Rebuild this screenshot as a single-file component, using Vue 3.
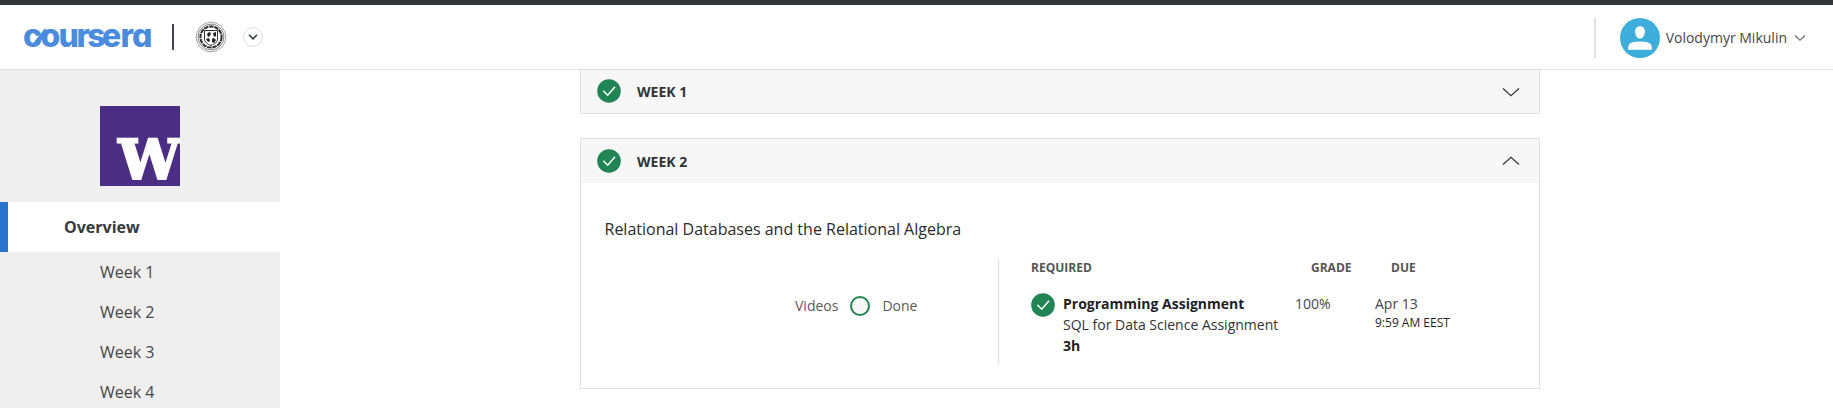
<script setup>
const weeks = ['Week 1', 'Week 2', 'Week 3', 'Week 4']
const cards = [
  { title: 'WEEK 1', open: false },
  { title: 'WEEK 2', open: true },
]
</script>

<template>
  <div class="page">
    <header class="header">
      <svg class="brand" width="130" height="26" viewBox="0 0 130 26" aria-label="coursera">
        <text y="22.500" :x="'-1 16.500 34.500 52.500 63.200 78 96.500 108'" class="brand-text">coursera</text>
        <path d="M11.500 20 L22.500 6" class="brand-link" />
      </svg>
      <span class="brand-divider"></span>
      <svg class="seal" width="32" height="32" viewBox="0 0 32 32" fill="none">
        <circle cx="16" cy="16" r="14.800" stroke="#888" stroke-width=".8" />
        <circle cx="16" cy="16" r="12.900" stroke="#666" stroke-width=".8" />
        <circle cx="16" cy="16" r="10.600" stroke="#292929" stroke-width="2" stroke-dasharray="4.500 .8" />
        <path d="M9.500 9.500H22.500V18C22.500 21 20 23 16 24.500C12 23 9.500 21 9.500 18Z" fill="#fff" stroke="#333" stroke-width="1" />
        <path d="M12 13l2-2 2 1-1 3-2 1zM18 12l3-1v4l-2 1zM11 18l3-1 1 3-2 1zM17 18l2-1 2 2-2 3-2-1z" fill="#222" />
      </svg>
      <span class="switcher">
        <svg width="10" height="6" viewBox="0 0 10 6" fill="none">
          <path d="M1 .8L5 4.800L9 .8" stroke="#373a3c" stroke-width="1.600" />
        </svg>
      </span>
      <div class="account">
        <svg width="40" height="40" viewBox="0 0 40 40">
          <circle cx="20" cy="20" r="20" fill="#3daedb" />
          <path d="M20 8.200c3 0 4.900 2.100 4.900 5.200 0 3.800-2.100 7.200-4.900 7.200s-4.900-3.400-4.900-7.200c0-3.100 1.900-5.200 4.900-5.200z" fill="#fff" />
          <path d="M8 31.700c0-5.500 1.200-8.200 12-8.200s12 2.700 12 8.200z" fill="#fff" />
        </svg>
        <span class="name">Volodymyr Mikulin</span>
        <svg width="12" height="8" viewBox="0 0 12 8" fill="none">
          <path d="M1 1.500L6 6.300L11 1.500" stroke="#666" stroke-width="1.100" />
        </svg>
      </div>
    </header>

    <div class="content">
      <aside class="sidebar">
        <svg class="school" width="80" height="80" viewBox="0 0 80 80">
          <rect width="80" height="80" fill="#4b2e83" />
          <text x="18.500" y="73" class="school-mark">W</text>
        </svg>
        <div class="overview">Overview</div>
        <div v-for="w in weeks" :key="w" class="week">{{ w }}</div>
      </aside>

      <main class="main">
        <section v-for="c in cards" :key="c.title" class="card" :class="{ open: c.open }">
          <div class="card-head">
            <svg class="check" width="24" height="24" viewBox="0 0 24 24" fill="none">
              <circle cx="12" cy="12" r="11.800" fill="#208455" />
              <path d="M6.300 11.700L10.700 16.200L18 7.800" stroke="#fff" stroke-width="1.500" />
            </svg>
            <h2>{{ c.title }}</h2>
            <svg class="toggle" width="18" height="10" viewBox="0 0 18 10" fill="none">
              <path :d="c.open ? 'M1 8.500L9 1.300L17 8.500' : 'M1 1.500L9 8.700L17 1.500'" stroke="#333" stroke-width="1.200" />
            </svg>
          </div>
          <div v-if="c.open" class="card-body">
            <h3>Relational Databases and the Relational Algebra</h3>
            <div class="columns">
              <div class="videos">
                <span>Videos</span>
                <i class="ring"></i>
                <span>Done</span>
              </div>
              <div class="required">
                <div class="row labels">
                  <span>REQUIRED</span><span>GRADE</span><span>DUE</span>
                </div>
                <div class="row item">
                  <svg width="24" height="24" viewBox="0 0 24 24" fill="none">
                    <circle cx="12" cy="12" r="11.800" fill="#208455" />
                    <path d="M6.300 11.700L10.700 16.200L18 7.800" stroke="#fff" stroke-width="1.500" />
                  </svg>
                  <div class="task">
                    <b>Programming Assignment</b>
                    <span>SQL for Data Science Assignment</span>
                    <b>3h</b>
                  </div>
                  <span class="grade">100%</span>
                  <div class="due">
                    <span class="date">Apr 13</span>
                    <span class="time">9:59 AM EEST</span>
                  </div>
                </div>
              </div>
            </div>
          </div>
        </section>
      </main>
    </div>
  </div>
</template>

<style>
body { margin: 0; background: #fff; overflow: hidden; }
</style>

<style scoped>
* { box-sizing: border-box; }
.page { width: 1833px; height: 408px; overflow: hidden; display: flex; flex-direction: column; font-family: "Open Sans", "Noto Sans", sans-serif; color: #43474a; background: #fff; }
svg { display: block; flex: none; }
.header { height: 70px; flex: none; display: flex; align-items: center; border-top: 5px solid #343538; border-bottom: 1px solid #e1e1e1; padding: 0 27px 0 24px; }
.brand { overflow: visible; }
.brand-text { font: 800 32px Inter, sans-serif; font-feature-settings: "cv11"; fill: #4a8bde; }
.brand-link { stroke: #4a8bde; stroke-width: 4.500; }
.brand-divider { width: 2px; height: 26px; margin-left: 18px; background: #3f4553; }
.seal { margin-left: 21px; }
.switcher { width: 20px; height: 20px; margin-left: 16px; border: 1px solid #ddd; border-radius: 50%; display: flex; align-items: center; justify-content: center; }
.account { margin-left: auto; display: flex; align-items: center; height: 40px; padding-left: 24px; border-left: 2px solid #e1e1e1; margin-top: 2px; }
.name { margin: -2px 7px 0 6px; font-size: 14px; white-space: nowrap; }
.content { flex: 1; min-height: 0; display: flex; }
.sidebar { width: 280px; flex: none; background: #efefef; overflow: hidden; }
.school { margin: 36px 0 16px 100px; }
.school-mark { font: bold 55px "DejaVu Serif", serif; fill: #fff; stroke: #fff; stroke-width: 2.500; }
.overview { height: 50px; line-height: 50px; border-left: 8px solid #2a73cc; padding-left: 56px; background: #fff; font-size: 16px; font-weight: 700; color: #373a3c; }
.week { height: 40px; line-height: 40px; padding-left: 100px; font-size: 16px; }
.main { width: 960px; margin-left: 300px; flex: none; }
.card { border: 1px solid #e1e1e1; border-top: 0; }
.card.open { border-top: 1px solid #e1e1e1; margin-top: 24px; height: 251px; }
.card-head { height: 44px; background: #f7f7f7; display: flex; align-items: center; padding: 0 19px 0 16px; }
.card:not(.open) .card-head { height: 43px; }
.card:not(.open) .check { margin-bottom: 1px; }
h2 { margin: 2px 0 0 16px; font-size: 14px; line-height: 20px; font-weight: 700; color: #333; }
.card:not(.open) h2 { margin-top: 1px; }
.toggle { margin-left: auto; }
.card-body { padding: 34px 24px 0 23.500px; }
h3 { margin: 0; font-size: 16px; line-height: 24px; font-weight: 400; color: #2b2b2b; }
.columns { display: flex; margin-top: 18px; height: 105px; }
.videos { width: 393.500px; flex: none; padding-left: 190.500px; display: flex; align-items: center; height: 94px; font-size: 14px; color: #5a5a5a; }
.videos span { margin-top: -1px; }
.ring { width: 20px; height: 20px; margin: 0 12px; border: 2px solid #208455; border-radius: 50%; background: #f7f7f7; }
.required { flex: 1; border-left: 1px solid #ddd; padding-left: 32px; }
.row { display: grid; }
.labels { grid-template-columns: 280px 80px 1fr; font-size: 12px; line-height: 18px; font-weight: 700; color: #555; }
.item { grid-template-columns: 32px 232px 80px 1fr; margin-top: 16px; font-size: 14px; line-height: 21px; color: #1f1f1f; }
.task, .due { display: flex; flex-direction: column; white-space: nowrap; }
.task span { color: #333; }
.grade, .date { color: #43474a; }
.task b { font-weight: 700; }
.time { font-size: 12px; line-height: 18px; }
</style>
